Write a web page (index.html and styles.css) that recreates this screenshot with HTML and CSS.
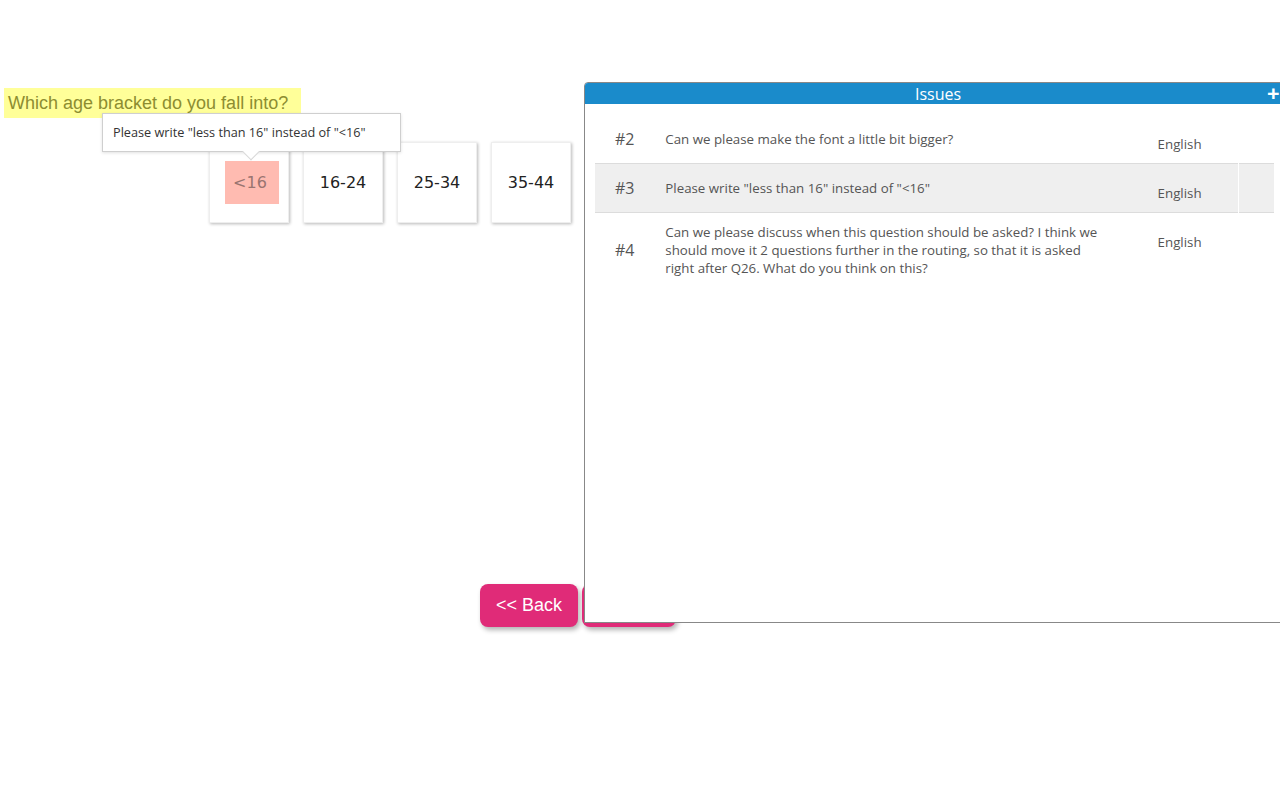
FILE: index.html
```html
<!DOCTYPE html>
<html>
<head>
<meta charset="utf-8">
<link rel="stylesheet" href="styles.css">
</head>
<body>
<div class="survey">
  <div class="question"><span class="qtext">Which age bracket do you fall into?</span></div>
  <div class="answers">
    <div class="card"><span class="hl">&lt;16</span></div>
    <div class="card">16-24</div>
    <div class="card">25-34</div>
    <div class="card">35-44</div>
  </div>
  <div class="nav">
    <button class="btn">&lt;&lt; Back</button>
    <button class="btn btn-next">Next &gt;&gt;</button>
  </div>
</div>

<div class="tooltip">Please write "less than 16" instead of "&lt;16"<span class="arrow"></span></div>

<div class="panel">
  <div class="panel-head"><span class="title">Issues</span><span class="plus">+</span></div>
  <table class="issues">
    <tr>
      <td class="num">#2</td>
      <td class="desc">Can we please make the font a little bit bigger?</td>
      <td class="lang">English</td>
      <td class="act"></td>
    </tr>
    <tr class="alt">
      <td class="num">#3</td>
      <td class="desc">Please write "less than 16" instead of "&lt;16"</td>
      <td class="lang">English</td>
      <td class="act"></td>
    </tr>
    <tr>
      <td class="num">#4</td>
      <td class="desc">Can we please discuss when this question should be asked? I think we should move it 2 questions further in the routing, so that it is asked right after Q26. What do you think on this?</td>
      <td class="lang">English</td>
      <td class="act"></td>
    </tr>
  </table>
</div>
</body>
</html>
```

FILE: styles.css
```css
html, body {
  margin: 0;
  padding: 0;
  background: #fff;
  width: 1280px;
  height: 800px;
  overflow: hidden;
}

body {
  font-family: "Liberation Sans", Arial, sans-serif;
  position: relative;
}

.survey {
  padding-top: 88px;
  padding-left: 4px;
}

.question {
  display: block;
}

.qtext {
  display: inline-block;
  background: #ffff99;
  color: #8d8d31;
  font-size: 18px;
  line-height: 30px;
  height: 30px;
  padding: 0 13px 0 4px;
}

.answers {
  display: flex;
  gap: 14px;
  margin-left: 205px;
  margin-top: 24px;
}

.card {
  width: 80px;
  height: 81px;
  box-sizing: border-box;
  border: 1px solid #eeeeee;
  background: #fff;
  box-shadow: 1px 1px 3px rgba(0, 0, 0, 0.28);
  display: flex;
  align-items: center;
  justify-content: center;
  font-family: "DejaVu Sans", Verdana, sans-serif;
  font-size: 16px;
  color: #222;
}

.hl {
  background: #ffbbb1;
  color: #9a7470;
  width: 54px;
  height: 43px;
  box-sizing: border-box;
  padding-right: 4px;
  margin-left: 6px;
  display: flex;
  align-items: center;
  justify-content: center;
}

.nav {
  display: flex;
  gap: 4px;
  margin-left: 476px;
  margin-top: 361px;
}

.btn {
  background: #e02b78;
  color: #fff;
  border: none;
  border-radius: 8px;
  font-family: "Liberation Sans", Arial, sans-serif;
  font-size: 18px;
  height: 43px;
  width: 98px;
  padding: 0;
  box-shadow: 2px 3px 5px rgba(0, 0, 0, 0.3);
}

.btn-next {
  width: 94px;
}

.tooltip {
  position: absolute;
  left: 102px;
  top: 113px;
  width: 299px;
  height: 39px;
  box-sizing: border-box;
  background: #fff;
  border: 1px solid #cfcfcf;
  box-shadow: 0 1px 3px rgba(0, 0, 0, 0.12);
  font-family: "Open Sans", sans-serif;
  font-size: 12.7px;
  color: #333;
  padding-left: 10px;
  line-height: 37px;
  white-space: nowrap;
}

.arrow {
  position: absolute;
  left: 142px;
  bottom: -7px;
  width: 11px;
  height: 11px;
  background: #fff;
  border-right: 1px solid #d8d8d8;
  border-bottom: 1px solid #d8d8d8;
  transform: rotate(45deg);
}

.panel {
  position: absolute;
  left: 584px;
  top: 82px;
  width: 708px;
  height: 541px;
  box-sizing: border-box;
  background: #fff;
  border: 1px solid #888;
  border-radius: 4px 0 0 0;
  font-family: "Open Sans", sans-serif;
}

.panel-head {
  background: #1a8bcb;
  height: 21px;
  border-radius: 3px 0 0 0;
  color: #fff;
  text-align: center;
  font-size: 16px;
  line-height: 22px;
  position: relative;
}

.plus {
  position: absolute;
  left: 682px;
  top: -2px;
  font-size: 22px;
  font-weight: bold;
  line-height: 22px;
}

.issues {
  margin: 11px 0 0 10px;
  width: 679px;
  border-collapse: collapse;
  font-size: 13.3px;
  color: #555;
}

.issues td {
  padding: 10px 0;
  line-height: 18px;
  vertical-align: middle;
}

.issues tr {
  border-bottom: 1px solid #dcdcdc;
}

.issues tr:last-child {
  border-bottom: none;
}

.issues tr.alt {
  background: #efefef;
}

.issues td.num {
  width: 50px;
  padding-left: 20px;
  padding-right: 0;
  font-size: 16px;
  color: #555;
}

.issues td.desc {
  width: 454px;
  padding-left: 1px;
  padding-right: 37px;
}

.issues td.lang {
  vertical-align: top;
  padding-top: 20px;
  padding-bottom: 10px;
  padding-left: 10px;
  width: 81px;
}

.issues td.act {
  width: 36px;
  border-left: 1px solid #fff;
}
```
